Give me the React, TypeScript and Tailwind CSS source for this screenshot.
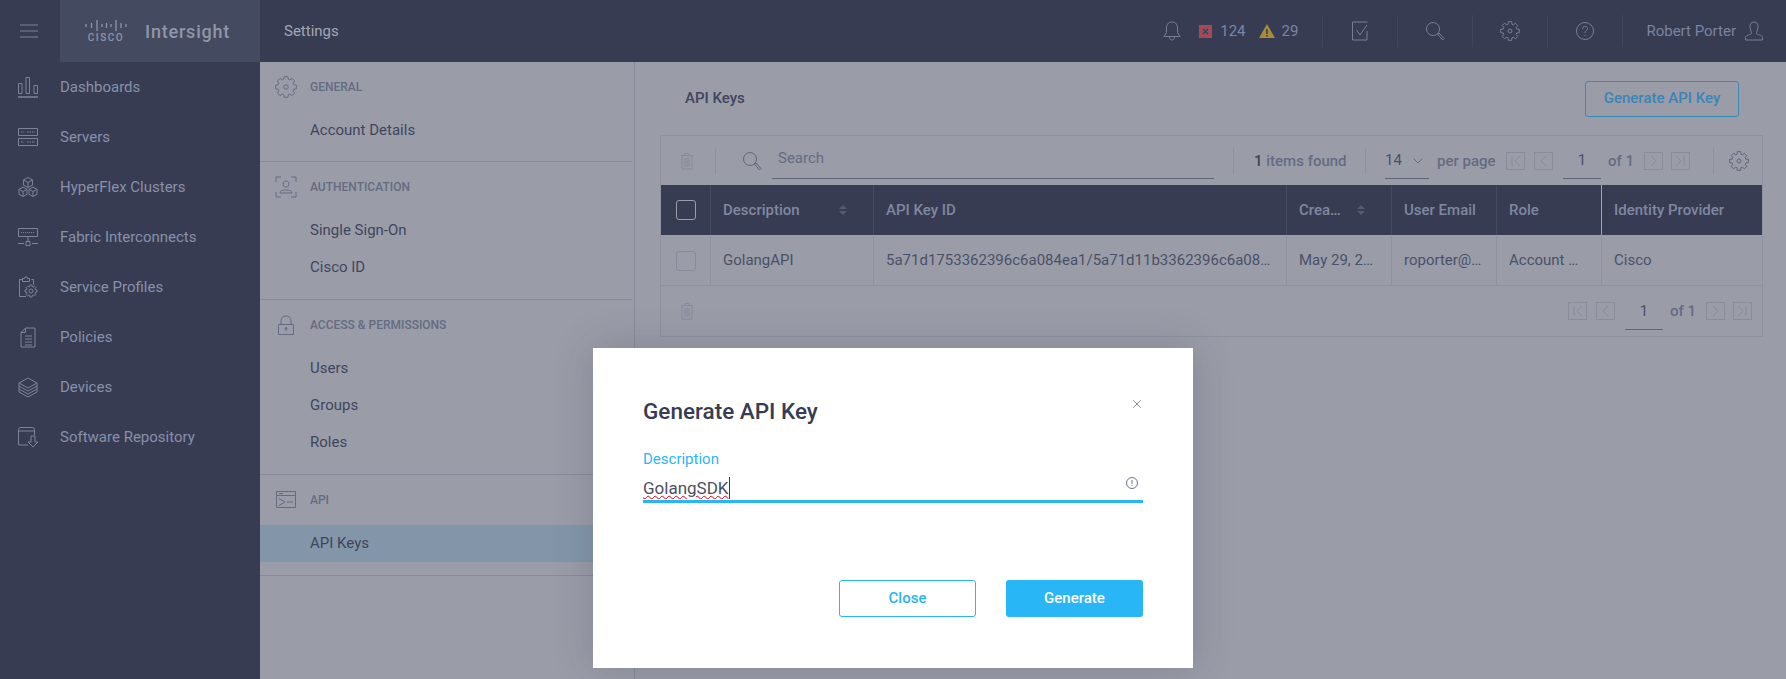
import type { ReactNode } from "react";
import { ChevronDown, X } from "lucide-react";

const font = { fontFamily: "Roboto, sans-serif" };

function Svg({ w, h, children, className }: { w: number; h: number; children: ReactNode; className?: string }) {
  return (
    <svg width={w} height={h} viewBox={`0 0 ${w} ${h}`} fill="none" stroke="currentColor" strokeWidth={1} className={className}>
      {children}
    </svg>
  );
}

// toothed outline for the settings cog
function gearPath(cx: number, cy: number, outer: number, inner: number) {
  const pts: string[] = [];
  for (let i = 0; i < 8; i++) {
    const a = (i * Math.PI) / 4;
    const step = Math.PI / 8;
    [
      [a - step * 0.45, outer],
      [a + step * 0.45, outer],
      [a + step * 0.75, inner],
      [a + step * 1.25, inner],
    ].forEach(([t, r]) => {
      pts.push(`${(cx + Math.sin(t) * r).toFixed(2)} ${(cy - Math.cos(t) * r).toFixed(2)}`);
    });
  }
  return `M${pts.join("L")}Z`;
}

function Gear({ size = 20, className }: { size?: number; className?: string }) {
  const c = size / 2;
  return (
    <Svg w={size} h={size} className={className}>
      <path d={gearPath(c, c, c - 0.5, c - 3)} strokeLinejoin="round" />
      <circle cx={c} cy={c} r={size / 10} />
    </Svg>
  );
}

function Magnifier({ className }: { className?: string }) {
  return (
    <Svg w={20} h={20} className={className}>
      <circle cx={8} cy={8} r={6.5} />
      <path d="M12.5 13l1.5-1 5 5.5-1.5 1.5z" />
    </Svg>
  );
}

function Trash() {
  return (
    <Svg w={14} h={18}>
      <path d="M1 3.5h12M5 3.5V1.5h4v2M2 3.5V17h10V3.5M5 6v9M7 6v9M9 6v9" />
    </Svg>
  );
}

const navItems: { label: string; icon: ReactNode }[] = [
  {
    label: "Dashboards",
    icon: (
      <Svg w={22} h={22}>
        <path d="M1.5 7.5h3.5v10H1.5zM9 1.5h3.5v16H9zM17 9.500h3.500v8H17z" />
        <path d="M1 21h20" strokeWidth={1.5} />
      </Svg>
    ),
  },
  {
    label: "Servers",
    icon: (
      <Svg w={22} h={20}>
        <path d="M1.500 1.500h19v7h-19zM1.500 11.500h19v7h-19z" />
        <path d="M4 5h3M10 5h8M4 15h3M10 15h8" strokeDasharray="1.500 1" />
      </Svg>
    ),
  },
  {
    label: "HyperFlex Clusters",
    icon: (
      <Svg w={22} h={22}>
        <path d="M11 1.500l4.500 2.500v5L11 11.500 6.500 9V4zM6.500 4L11 6.500 15.500 4M11 6.500v5" />
        <path d="M6 11l4 2.300v5L6 20.500 2 18.300v-5zM2 13.300l4 2.200 4-2.200M6 15.500v5" />
        <path d="M16 11l4 2.300v5l-4 2.200-4-2.200v-5zM12 13.300l4 2.200 4-2.200M16 15.500v5" />
      </Svg>
    ),
  },
  {
    label: "Fabric Interconnects",
    icon: (
      <Svg w={22} h={20}>
        <path d="M1.500 1.500h19v8h-19z" />
        <path d="M4 5.500h14" strokeDasharray="1 1" />
        <path d="M11 9.500v5M9 14.500h4v4H9zM1 16.500h6M15 16.500h6" />
      </Svg>
    ),
  },
  {
    label: "Service Profiles",
    icon: (
      <Svg w={20} h={22}>
        <path d="M13.500 3.500h2v5M8 20.500H1.500v-17h3M4.500 5.500v-3h2l.5-1.500h2l.5 1.500h2v3z" />
        <path d={gearPath(13, 15, 6, 4.500)} strokeLinejoin="round" />
        <circle cx={13} cy={15} r={2} />
      </Svg>
    ),
  },
  {
    label: "Policies",
    icon: (
      <Svg w={16} h={21}>
        <path d="M5.500 1h9.500v19H1V5.500zM5.500 1v4.500H1M5 9h7M5 12h7M5 15h7M5 18h7" />
      </Svg>
    ),
  },
  {
    label: "Devices",
    icon: (
      <Svg w={20} h={21}>
        <path d="M10 1l9 5-9 5-9-5zM1 6v9l9 5 9-5V6M1 9l9 5 9-5M1 12l9 5 9-5M10 11v0" />
      </Svg>
    ),
  },
  {
    label: "Software Repository",
    icon: (
      <Svg w={22} h={22}>
        <path d="M11 19H1.500V3.500q0-2 2-2h12q2 0 2 2V9M1.500 5h16" />
        <path d="M14 10h4v6h3l-5 5-5-5h3z" />
      </Svg>
    ),
  },
];

function NavItem({ label, icon }: { label: string; icon: ReactNode }) {
  return (
    <div className="flex h-[50px] items-center">
      <div className="flex w-[60px] justify-center pr-[4px] text-[#7c849b]">{icon}</div>
      <span className="text-[15px] text-[#8791aa]">{label}</span>
    </div>
  );
}

function Section({ title, icon, items, padBottom }: { title: string; icon: ReactNode; items: string[]; padBottom: string }) {
  return (
    <div className={`mr-[2px] border-b border-[#868a9a] ${padBottom}`}>
      <div className="flex h-[50px] items-center">
        <div className="flex w-[50px] justify-center pl-[2px] text-[#656b82]">{icon}</div>
        <span className="text-[12px] font-medium text-[#656b82]">{title}</span>
      </div>
      {items.map((item) => (
        <div
          key={item}
          className={`flex h-[37px] items-center pl-[50px] text-[15px] text-[#3f455c] ${item === "API Keys" ? "mr-[-2px] bg-[#8396a9]" : ""}`}
        >
          {item}
        </div>
      ))}
    </div>
  );
}

function PageBox({ d }: { d: string }) {
  return (
    <div className="flex h-[18px] w-[19px] items-center justify-center border border-[#888c9b] text-[#888c9b]">
      <Svg w={11} h={12}>
        <path d={d} />
      </Svg>
    </div>
  );
}

function Pager() {
  return (
    <div className="flex items-center">
      <PageBox d="M2 1v10M10 1L5 6l5 5" />
      <div className="ml-[9px]">
        <PageBox d="M8 1L3 6l5 5" />
      </div>
      <div className="ml-[10px] flex h-[37px] w-[38px] items-center justify-center border-b border-[#5f6478] pt-[1px] text-[15px] text-[#4a5068]">
        1
      </div>
      <span className="ml-[7px] w-[26px] pt-[1px] text-[15px] font-medium whitespace-nowrap text-[#656b82]">of 1</span>
      <div className="ml-[10px]">
        <PageBox d="M3 1l5 5-5 5" />
      </div>
      <div className="ml-[8px]">
        <PageBox d="M1 1l5 5-5 5M9 1v10" />
      </div>
    </div>
  );
}

function SortArrows() {
  return (
    <span className="flex flex-col gap-[2px] text-[#535a72]">
      <span className="h-0 w-0 border-x-[4px] border-b-[4px] border-x-transparent border-b-current" />
      <span className="h-0 w-0 border-x-[4px] border-t-[4px] border-x-transparent border-t-current" />
    </span>
  );
}

const columns = [
  { head: "Description", cell: "GolangAPI", width: "w-[163px]", sort: true },
  { head: "API Key ID", cell: "5a71d1753362396c6a084ea1/5a71d11b3362396c6a08…", width: "w-[413px]" },
  { head: "Crea…", cell: "May 29, 2…", width: "w-[105px]", sort: true },
  { head: "User Email", cell: "roporter@…", width: "w-[105px]" },
  { head: "Role", cell: "Account …", width: "w-[105px]" },
  { head: "Identity Provider", cell: "Cisco", width: "flex-1" },
];

function HeaderCell({ children }: { children: ReactNode }) {
  return <div className="flex h-[32px] w-[75px] items-center justify-center border-l border-[#41465c] text-[#767e96]">{children}</div>;
}

export default function App() {
  return (
    <div style={font} className="relative h-[679px] w-full overflow-hidden bg-[#9a9da8]">
      {/* top bar */}
      <header className="flex h-[62px] items-center bg-[#373c52]">
        <div className="flex h-full w-[60px] items-center justify-center pr-[2px] text-[#7c849b]">
          <Svg w={18} h={14}>
            <path d="M0 1h18M0 7h18M0 13h18" />
          </Svg>
        </div>
        <div className="flex h-full w-[200px] items-center bg-[#444a5f] pl-[25px] text-[#8f96a8]">
          <div className="flex w-[42px] flex-col items-center">
            <Svg w={42} h={12}>
              <path d="M1 5v3M6.500 4v5M12 1v11M17 5v3M21.500 4v5M26 5v3M31 1v11M36 4v5M41 5v3" strokeWidth={1.300} />
            </Svg>
            <span className="mt-[1px] text-[10px] leading-[12px] font-medium tracking-[1.5px]">CISCO</span>
          </div>
          <span className="ml-[18px] text-[18px] font-medium tracking-[0.8px]">Intersight</span>
        </div>
        <span className="ml-[24px] text-[15px] text-[#a3a8b5]">Settings</span>

        <div className="ml-auto flex items-center pr-[22px] text-[#767e96]">
          <Svg w={18} h={22} className="mr-[18px]">
            <path d="M9 2c-4 0-5.500 3-5.500 6v4.500L1 16.500h16l-2.500-4V8c0-3-1.500-6-5.500-6zM6.500 17c0 4 5 4 5 0" />
          </Svg>
          <span className="flex h-[13px] w-[13px] items-center justify-center bg-[#a34a5a] text-[#373c52]">
            <X size={9} strokeWidth={3} />
          </span>
          <span className="ml-[8px] text-[15px] text-[#7a86a6]">124</span>
          <svg width="16" height="14" viewBox="0 0 16 14" className="ml-[13px]">
            <path d="M8 0l8 14H0z" fill="#a88a3c" />
            <path d="M8 5v5M8 11v1.500" stroke="#373c52" strokeWidth={1.500} />
          </svg>
          <span className="mr-[24px] ml-[7px] text-[15px] text-[#7a86a6]">29</span>
          <HeaderCell>
            <Svg w={20} h={20}>
              <path d="M16.500 1H1.500v18h14.500v-9M5.500 9l3.500 5 7-10" transform="translate(1 0)" />
            </Svg>
          </HeaderCell>
          <HeaderCell>
            <Magnifier />
          </HeaderCell>
          <HeaderCell>
            <Gear />
          </HeaderCell>
          <HeaderCell>
            <Svg w={20} h={20}>
              <circle cx={10} cy={10} r={8.500} />
              <path d="M7.500 8c0-3.500 5-3.500 5-.5 0 2-2.500 2-2.500 4.500M10 14v1" />
            </Svg>
          </HeaderCell>
          <div className="flex h-[32px] items-center border-l border-[#41465c] pl-[23px]">
            <span className="text-[15px] text-[#7a83a0]">Robert Porter</span>
            <Svg w={20} h={20} className="ml-[8px]">
              <path d="M10 1c-3 0-4 2-4 4.500S7.500 11 7.500 12.500c0 1-6 1.500-6 4V19h17v-2.500c0-2.500-6-3-6-4C12.500 11 14 8 14 5.500S13 1 10 1z" />
            </Svg>
          </div>
        </div>
      </header>

      <div className="flex h-[617px]">
        {/* main nav */}
        <nav className="w-[260px] shrink-0 bg-[#373c52]">
          {navItems.map((item) => (
            <NavItem key={item.label} {...item} />
          ))}
        </nav>

        {/* settings menu */}
        <aside className="w-[375px] shrink-0 border-r border-[#868a9a]">
          <Section title="GENERAL" icon={<Gear size={22} />} items={["Account Details"]} padBottom="pb-[12px]" />
          <Section
            title="AUTHENTICATION"
            icon={
              <Svg w={22} h={22}>
                <path d="M1 6V1h5M16 1h5v5M1 16v5h5M16 21h5v-5M11 5c-2 0-3 1.500-3 3s1 3 3 3 3-1.500 3-3-1-3-3-3zM5 17c0-3 4-3 6-3s6 0 6 3z" />
              </Svg>
            }
            items={["Single Sign-On", "Cisco ID"]}
            padBottom="pb-[13px]"
          />
          <Section
            title="ACCESS & PERMISSIONS"
            icon={
              <Svg w={18} h={22}>
                <path d="M1.500 10.500h15v10h-15zM4 10.500V6.500c0-6 10-6 10 0v4M9 14v3" />
                <circle cx={9} cy={14.500} r={1} />
              </Svg>
            }
            items={["Users", "Groups", "Roles"]}
            padBottom="pb-[13px]"
          />
          <Section
            title="API"
            icon={
              <Svg w={20} h={18}>
                <path d="M.5.500h19v16h-19zM.5 4.500h19M3 2.500h4M3 7.500l6 3.500-6 3.500M11 11h6" />
              </Svg>
            }
            items={["API Keys"]}
            padBottom="pb-[13px]"
          />
        </aside>

        {/* API keys table */}
        <main className="min-w-0 flex-1 pr-[23px] pl-[25px]">
          <div className="flex h-[73px] items-center justify-between pr-[24px] pl-[25px]">
            <h1 className="text-[15px] font-medium text-[#3f455c]">API Keys</h1>
            <button className="h-[36px] w-[154px] rounded-[3px] border border-[#3a8ab8] text-[15px] font-medium text-[#3a85b5]">
              Generate API Key
            </button>
          </div>

          <div className="h-[202px] w-[1103px] border border-[#8e919f]">
            <div className="flex h-[49px] items-center text-[#868a9a]">
              <div className="flex w-[54px] flex-none justify-center pr-[3px]">
                <Trash />
              </div>
              <div className="flex h-[26px] w-[518px] flex-none items-center border-l border-[#8e919f] pl-[26px] text-[#5f6478]">
                <Magnifier />
                <div className="ml-[10px] flex h-[37px] w-[442px] items-start border-b border-[#5f6478] pt-[7px] pl-[6px] text-[15px] leading-[18px] text-[#656b82]">
                  Search
                </div>
              </div>
              <div className="flex h-[26px] w-[132px] flex-none items-center border-l border-[#8e919f] pt-[1px] pl-[20px] text-[15px] font-medium text-[#656b82]">
                <span className="text-[#3f455c]">1</span>&nbsp;items found
              </div>
              <div className="flex h-[26px] w-[141px] flex-none items-center border-l border-[#8e919f] pl-[19px]">
                <div className="flex h-[37px] w-[44px] flex-none items-center gap-[8px] border-b border-[#5f6478] pt-[1px] text-[15px] text-[#4a5068]">
                  14 <ChevronDown size={16} strokeWidth={1.25} className="text-[#5f6478]" />
                </div>
                <span className="ml-[8px] pt-[1px] text-[15px] font-medium whitespace-nowrap text-[#656b82]">per page</span>
              </div>
              <Pager />
              <div className="ml-[23px] flex h-[26px] items-center border-l border-[#8e919f] pl-[15px] text-[#5f6478]">
                <Gear />
              </div>
            </div>

            <div className="flex h-[50px] bg-[#373c52] text-[15px] font-medium text-[#7f88a0]">
              <div className="flex w-[49px] items-center justify-center">
                <span className="h-[20px] w-[20px] rounded-[3px] border border-[#9a9da8]" />
              </div>
              {columns.map((col) => (
                <div
                  key={col.head}
                  className={`flex items-center justify-between border-l pr-[26px] pl-[12px] ${col.width} ${
                    col.head === "Identity Provider" ? "border-[#a4a7b2]" : "border-[#454a60]"
                  }`}
                >
                  <span className="whitespace-nowrap">{col.head}</span>
                  {col.sort && <SortArrows />}
                </div>
              ))}
            </div>

            <div className="flex h-[51px] border-b border-[#8e919f] pt-[1px] text-[15px] text-[#4a5068]">
              <div className="flex w-[49px] items-center justify-center">
                <span className="h-[20px] w-[20px] rounded-[3px] border border-[#868a9a]" />
              </div>
              {columns.map((col) => (
                <div key={col.head} className={`flex items-center border-l border-[#8e919f] pl-[12px] whitespace-nowrap ${col.width}`}>
                  {col.cell}
                </div>
              ))}
            </div>

            <div className="flex h-[50px] items-center justify-between pr-[10px] text-[#868a9a]">
              <div className="flex w-[54px] justify-center pr-[3px]">
                <Trash />
              </div>
              <Pager />
            </div>
          </div>
        </main>
      </div>

      {/* modal */}
      <div className="absolute inset-0 flex justify-center pt-[348px]">
        <div className="flex h-[320px] w-[600px] flex-col bg-white px-[50px] shadow-[0_0_40px_rgba(40,44,60,0.2)]">
          <div className="relative pt-[48px]">
            <h2 className="text-[22.5px] leading-[30px] font-medium text-[#373c52]">Generate API Key</h2>
            <X size={14} strokeWidth={1} className="absolute top-[49px] right-[-1px] text-[#373c52]" />
          </div>
          <label className="mt-[24px] text-[15px] leading-[18px] text-[#29b6f6]">Description</label>
          <div className="mt-[1px] flex h-[34px] items-center justify-between border-b-[3px] border-[#29b6f6]">
            <span className="mt-[6px] border-r border-[#373c52] text-[17px] leading-[22px] text-[#4a4f60] underline decoration-red-600 decoration-wavy decoration-1 underline-offset-1">
              GolangSDK
            </span>
            <Svg w={12} h={12} className="mr-[5px] mb-[3px] text-[#6b7188]">
              <circle cx={6} cy={6} r={5.500} />
              <path d="M6 3v4M6 8v1" />
            </Svg>
          </div>
          <div className="mt-[77px] flex justify-end gap-[30px]">
            <button className="h-[37px] w-[137px] rounded-[3px] border border-[#29b6f6] text-[15px] font-medium text-[#29b6f6]">
              Close
            </button>
            <button className="h-[37px] w-[137px] rounded-[3px] bg-[#29b6f6] text-[15px] font-medium text-white">Generate</button>
          </div>
        </div>
      </div>
    </div>
  );
}
